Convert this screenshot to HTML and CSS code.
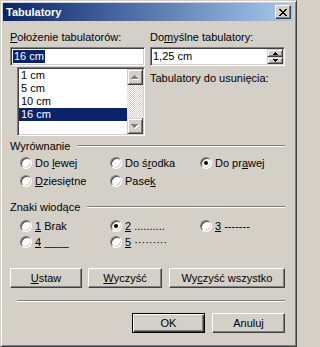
FILE: index.html
```html
<!DOCTYPE html>
<html lang="pl">
<head>
<meta charset="utf-8">
<title>Tabulatory</title>
<link rel="stylesheet" href="styles.css">
</head>
<body>
<div class="window">
  <div class="titlebar">
    <span class="title">Tabulatory</span>
    <span class="close">
      <svg width="8" height="7" viewBox="0 0 8 7" shape-rendering="crispEdges">
        <rect x="0" y="0" width="2" height="1"/><rect x="6" y="0" width="2" height="1"/>
        <rect x="1" y="1" width="2" height="1"/><rect x="5" y="1" width="2" height="1"/>
        <rect x="2" y="2" width="4" height="1"/>
        <rect x="3" y="3" width="2" height="1"/>
        <rect x="2" y="4" width="4" height="1"/>
        <rect x="1" y="5" width="2" height="1"/><rect x="5" y="5" width="2" height="1"/>
        <rect x="0" y="6" width="2" height="1"/><rect x="6" y="6" width="2" height="1"/>
      </svg>
    </span>
  </div>
  <div class="client">
    <div class="top">
      <div class="col">
        <div class="label"><u>P</u>ołożenie tabulatorów:</div>
        <div class="edit"><span class="seltext">16 cm</span></div>
        <div class="list">
          <div class="items">
            <div class="item">1 cm</div>
            <div class="item">5 cm</div>
            <div class="item">10 cm</div>
            <div class="item selected">16 cm</div>
          </div>
          <div class="vscroll">
            <div class="sbtn">
              <svg width="8" height="5" viewBox="0 0 8 5" shape-rendering="crispEdges">
                <g fill="#fff"><rect x="4" y="1" width="1" height="1"/><rect x="3" y="2" width="3" height="1"/><rect x="2" y="3" width="5" height="1"/><rect x="1" y="4" width="7" height="1"/></g>
                <g fill="#808080"><rect x="3" y="0" width="1" height="1"/><rect x="2" y="1" width="3" height="1"/><rect x="1" y="2" width="5" height="1"/><rect x="0" y="3" width="7" height="1"/></g>
              </svg>
            </div>
            <div class="track"></div>
            <div class="sbtn">
              <svg width="8" height="5" viewBox="0 0 8 5" shape-rendering="crispEdges">
                <g fill="#fff"><rect x="1" y="1" width="7" height="1"/><rect x="2" y="2" width="5" height="1"/><rect x="3" y="3" width="3" height="1"/><rect x="4" y="4" width="1" height="1"/></g>
                <g fill="#808080"><rect x="0" y="0" width="7" height="1"/><rect x="1" y="1" width="5" height="1"/><rect x="2" y="2" width="3" height="1"/><rect x="3" y="3" width="1" height="1"/></g>
              </svg>
            </div>
          </div>
        </div>
      </div>
      <div class="col">
        <div class="label">Do<u>m</u>yślne tabulatory:</div>
        <div class="edit">
          <span class="edittext">1,25 cm</span>
          <div class="spinner">
            <div class="spinbtn up">
              <svg width="5" height="3" viewBox="0 0 5 3" shape-rendering="crispEdges"><rect x="2" y="0" width="1" height="1"/><rect x="1" y="1" width="3" height="1"/><rect x="0" y="2" width="5" height="1"/></svg>
            </div>
            <div class="spinbtn down">
              <svg width="5" height="3" viewBox="0 0 5 3" shape-rendering="crispEdges"><rect x="0" y="0" width="5" height="1"/><rect x="1" y="1" width="3" height="1"/><rect x="2" y="2" width="1" height="1"/></svg>
            </div>
          </div>
        </div>
        <div class="label remove">Tabulatory do usunięcia:</div>
      </div>
    </div>

    <div class="group-head first">
      <span>Wyrównanie</span><span class="gline"></span>
    </div>
    <div class="radios align">
      <label class="opt"><span class="radio"></span><span>Do <u>l</u>ewej</span></label>
      <label class="opt"><span class="radio"></span><span>Do ś<u>r</u>odka</span></label>
      <label class="opt"><span class="radio checked"></span><span>Do pr<u>a</u>wej</span></label>
      <label class="opt"><span class="radio"></span><span><u>D</u>ziesiętne</span></label>
      <label class="opt"><span class="radio"></span><span>Pase<u>k</u></span></label>
    </div>

    <div class="group-head second">
      <span>Znaki wiodące</span><span class="gline"></span>
    </div>
    <div class="radios lead">
      <label class="opt"><span class="radio"></span><span><u>1</u> Brak</span></label>
      <label class="opt"><span class="radio checked"></span><span><u>2</u> ..........</span></label>
      <label class="opt"><span class="radio"></span><span><u>3</u> -------</span></label>
      <label class="opt"><span class="radio"></span><span><u>4</u> ____</span></label>
      <label class="opt"><span class="radio"></span><span><u>5</u> ·········</span></label>
    </div>

    <div class="btnrow">
      <div class="btn w-ustaw"><span><u>U</u>staw</span></div>
      <div class="btn w-wyczysc"><span><u>W</u>yczyść</span></div>
      <div class="btn w-all"><span>Wy<u>c</u>zyść wszystko</span></div>
    </div>

    <div class="separator"></div>

    <div class="okrow">
      <div class="btn default"><span>OK</span></div>
      <div class="btn"><span>Anuluj</span></div>
    </div>
  </div>
</div>
</body>
</html>
```

FILE: styles.css
```css
* { box-sizing: border-box; }

html, body {
  margin: 0;
  padding: 0;
}

body {
  width: 297px;
  height: 347px;
  overflow: hidden;
  background: #d4d0c8;
  font-family: "Liberation Sans", Arial, sans-serif;
  font-size: 11px;
  line-height: 13px;
  color: #000;
}

u { text-decoration: underline; text-underline-offset: 1px; }

.window {
  width: 297px;
  height: 347px;
  background: #d4d0c8;
  border: 1px solid;
  border-color: #d4d0c8 #404040 #404040 #d4d0c8;
  box-shadow: inset 1px 1px #fff, inset -1px -1px #808080;
  padding: 2px 3px 3px 2px;
  display: flex;
  flex-direction: column;
}

.titlebar {
  height: 18px;
  flex: none;
  background: linear-gradient(to right, #0a246a, #a6caf0);
  display: flex;
  align-items: center;
  justify-content: space-between;
  padding: 0 2px 0 3px;
}

.title {
  color: #fff;
  font-weight: bold;
  font-size: 11px;
}

.close {
  width: 16px;
  height: 14px;
  background: #d4d0c8;
  border: 1px solid;
  border-color: #fff #404040 #404040 #fff;
  box-shadow: inset -1px -1px #808080;
  display: flex;
  align-items: center;
  justify-content: center;
  padding-right: 1px;
}

.close svg { display: block; fill: #000; }

.client {
  flex: 1;
  padding: 10px 8px 0 7px;
}

.top {
  display: grid;
  grid-template-columns: 135px 135px;
  column-gap: 5px;
}

.label { height: 13px; white-space: nowrap; }

.label.remove { margin-top: 6px; }

.edit {
  height: 19px;
  margin-top: 3px;
  background: #fff;
  border: 1px solid;
  border-color: #808080 #fff #fff #808080;
  box-shadow: inset 1px 1px #404040, inset -1px -1px #d4d0c8;
  padding: 1px;
  display: flex;
  align-items: flex-start;
}

.seltext {
  margin: 1px 0 0 1px;
  height: 13px;
  padding: 0 1px;
  background: #0a246a;
  color: #fff;
}

.edittext {
  margin: 1px 0 0 1px;
  height: 13px;
}

.spinner {
  margin-left: auto;
  width: 16px;
  height: 15px;
  display: flex;
  flex-direction: column;
}

.spinbtn {
  background: #d4d0c8;
  border: 1px solid;
  border-color: #d4d0c8 #404040 #404040 #d4d0c8;
  box-shadow: inset 1px 1px #fff, inset -1px -1px #808080;
  display: flex;
  align-items: center;
  justify-content: center;
}

.spinbtn.up { height: 8px; }
.spinbtn.down { height: 7px; }
.spinbtn svg { display: block; fill: #000; }

.list {
  margin: 1px 0 0 7px;
  height: 69px;
  background: #fff;
  border: 1px solid;
  border-color: #808080 #fff #fff #808080;
  box-shadow: inset 1px 1px #404040, inset -1px -1px #d4d0c8;
  padding: 1px;
  display: flex;
}

.items { flex: 1; }

.item {
  height: 13px;
  padding-left: 2px;
  white-space: nowrap;
}

.item.selected {
  background: #0a246a;
  color: #fff;
}

.vscroll {
  width: 16px;
  display: flex;
  flex-direction: column;
}

.sbtn {
  height: 16px;
  flex: none;
  background: #d4d0c8;
  border: 1px solid;
  border-color: #d4d0c8 #404040 #404040 #d4d0c8;
  box-shadow: inset 1px 1px #fff, inset -1px -1px #808080;
  display: flex;
  align-items: center;
  justify-content: center;
}

.sbtn svg { display: block; }

.track {
  flex: 1;
  background: repeating-conic-gradient(#d4d0c8 0% 25%, #fff 0% 50%) 0 0 / 2px 2px;
}

.group-head {
  display: flex;
  height: 13px;
  white-space: nowrap;
}

.group-head.first { margin-top: 4px; }
.group-head.second { margin-top: 11px; }

.gline {
  flex: 1;
  margin: 5px 0 0 7px;
  height: 2px;
  border-top: 1px solid #808080;
  border-bottom: 1px solid #fff;
}

.radios {
  display: grid;
  grid-template-columns: 90px 90px 1fr;
  padding-left: 10px;
}

.radios.align { margin-top: 1px; grid-auto-rows: 18px; }
.radios.lead { margin-top: 4px; grid-auto-rows: 16px; }

.opt {
  display: flex;
  align-items: center;
  white-space: nowrap;
}

.radio {
  position: relative;
  flex: none;
  width: 12px;
  height: 12px;
  margin-right: 3px;
  border-radius: 50%;
  background: #fff;
  border: 1px solid;
  border-color: #808080 #fff #fff #808080;
  box-shadow: inset 1px 1px #404040, inset -1px -1px #d4d0c8;
}

.radio.checked::after {
  content: "";
  position: absolute;
  left: 3px;
  top: 3px;
  width: 4px;
  height: 4px;
  border-radius: 50%;
  background: #000;
}

.btnrow {
  display: flex;
  margin-top: 18px;
}

.btn {
  height: 20px;
  background: #d4d0c8;
  border: 1px solid;
  border-color: #fff #404040 #404040 #fff;
  box-shadow: inset -1px -1px #808080;
  display: flex;
  align-items: center;
  justify-content: center;
  white-space: nowrap;
}

.w-ustaw { width: 72px; margin-right: 6px; }
.w-wyczysc { width: 74px; margin-right: 7px; }
.w-all { width: 116px; }

.separator {
  margin: 12px 0 0 7px;
  height: 2px;
  border-top: 1px solid #808080;
  border-bottom: 1px solid #fff;
}

.okrow {
  display: flex;
  justify-content: flex-end;
  gap: 7px;
  margin-top: 11px;
}

.okrow .btn { width: 73px; }

.btn.default {
  border: 1px solid #000;
  box-shadow: inset 1px 1px #fff, inset -1px -1px #404040, inset -2px -2px #808080;
}
```
